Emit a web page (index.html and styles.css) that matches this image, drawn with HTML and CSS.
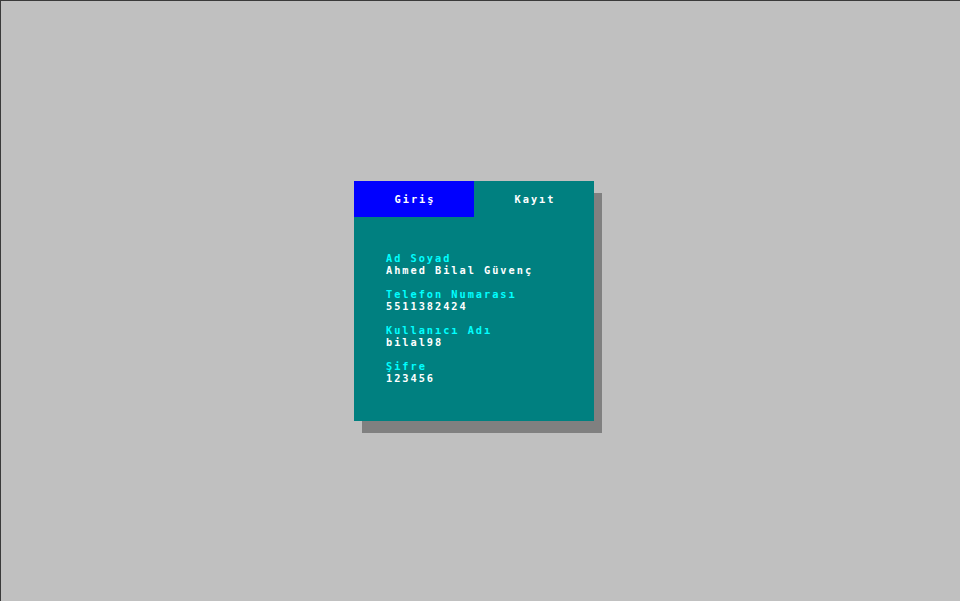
FILE: index.html
```html
<!DOCTYPE html>
<html lang="tr">
<head>
<meta charset="utf-8">
<title>Kayıt</title>
<link rel="stylesheet" href="styles.css">
</head>
<body>
<div class="screen">
  <div class="card">
    <div class="tabs">
      <div class="tab active">Giriş</div>
      <div class="tab">Kayıt</div>
    </div>
    <div class="fields">
      <div class="field">
        <div class="label">Ad Soyad</div>
        <div class="value">Ahmed Bilal Güvenç</div>
      </div>
      <div class="field">
        <div class="label">Telefon Numarası</div>
        <div class="value">5511382424</div>
      </div>
      <div class="field">
        <div class="label">Kullanıcı Adı</div>
        <div class="value">bilal98</div>
      </div>
      <div class="field">
        <div class="label">Şifre</div>
        <div class="value">123456</div>
      </div>
    </div>
  </div>
</div>
</body>
</html>
```
FILE: styles.css
```css
html, body {
  margin: 0;
  padding: 0;
  height: 100%;
}
body {
  background: #c0c0c0;
  font-family: "DejaVu Sans Mono", "Liberation Mono", monospace;
  font-weight: bold;
  font-size: 10.3px;
  letter-spacing: 1.97px;
}
.screen {
  box-sizing: border-box;
  height: 601px;
  border-top: 1px solid #3a3a3a;
  border-left: 1px solid #3a3a3a;
  padding: 180px 0 0 353px;
}
.card {
  width: 240px;
  height: 240px;
  background: #008080;
  box-shadow: 8px 12px 0 #808080;
  display: flex;
  flex-direction: column;
}
.tabs {
  display: flex;
  height: 36px;
}
.tab {
  flex: 1;
  display: flex;
  align-items: center;
  justify-content: center;
  color: #ffffff;
  line-height: 12px;
  padding-left: 2px;
}
.tab.active {
  background: #0000ff;
}
.fields {
  padding: 35px 0 0 32px;
  display: flex;
  flex-direction: column;
  gap: 12px;
}
.label, .value {
  line-height: 12px;
  white-space: pre;
}
.label {
  color: #00ffff;
}
.value {
  color: #ffffff;
}
```
